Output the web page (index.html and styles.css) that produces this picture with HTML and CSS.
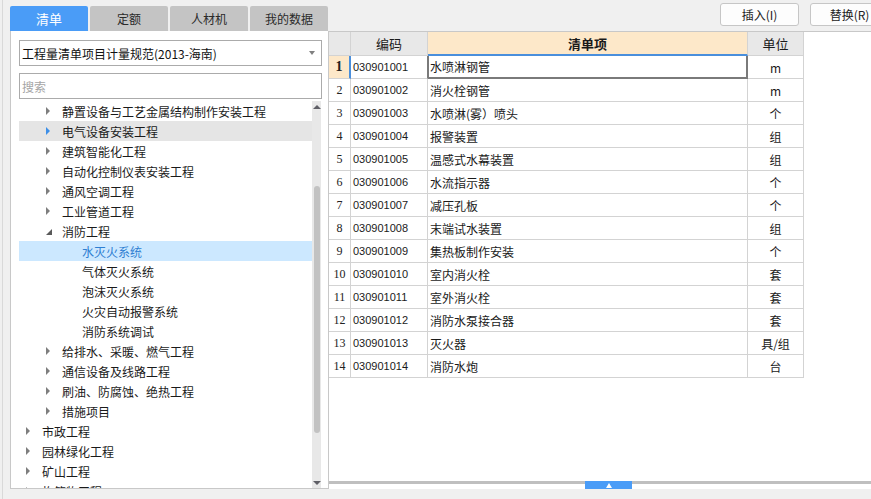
FILE: index.html
```html
<!DOCTYPE html>
<html lang="zh-CN">
<head>
<meta charset="utf-8">
<title>清单</title>
<link rel="stylesheet" href="styles.css">
</head>
<body>
<div class="app">
  <div class="frame-line"></div>
  <div class="left">
    <div class="tabs">
      <div class="tab active">清单</div>
      <div class="tab">定额</div>
      <div class="tab">人材机</div>
      <div class="tab">我的数据</div>
    </div>
    <div class="panel">
      <div class="select"><span>工程量清单项目计量规范(2013-海南)</span><i class="caret"></i></div>
      <div class="search">搜索</div>
      <div class="tree">
        <div class="tree-list">
          <div class="node l2"><i class="arr"></i><span>静置设备与工艺金属结构制作安装工程</span></div>
          <div class="node l2 hover"><i class="arr"></i><span>电气设备安装工程</span></div>
          <div class="node l2"><i class="arr"></i><span>建筑智能化工程</span></div>
          <div class="node l2"><i class="arr"></i><span>自动化控制仪表安装工程</span></div>
          <div class="node l2"><i class="arr"></i><span>通风空调工程</span></div>
          <div class="node l2"><i class="arr"></i><span>工业管道工程</span></div>
          <div class="node l2 open"><i class="arr"></i><span>消防工程</span></div>
          <div class="node l3 selected"><i class="arr none"></i><span>水灭火系统</span></div>
          <div class="node l3"><i class="arr none"></i><span>气体灭火系统</span></div>
          <div class="node l3"><i class="arr none"></i><span>泡沫灭火系统</span></div>
          <div class="node l3"><i class="arr none"></i><span>火灾自动报警系统</span></div>
          <div class="node l3"><i class="arr none"></i><span>消防系统调试</span></div>
          <div class="node l2"><i class="arr"></i><span>给排水、采暖、燃气工程</span></div>
          <div class="node l2"><i class="arr"></i><span>通信设备及线路工程</span></div>
          <div class="node l2"><i class="arr"></i><span>刷油、防腐蚀、绝热工程</span></div>
          <div class="node l2"><i class="arr"></i><span>措施项目</span></div>
          <div class="node l1"><i class="arr"></i><span>市政工程</span></div>
          <div class="node l1"><i class="arr"></i><span>园林绿化工程</span></div>
          <div class="node l1"><i class="arr"></i><span>矿山工程</span></div>
          <div class="node l1"><i class="arr"></i><span>构筑物工程</span></div>
        </div>
        <div class="vscroll">
          <i class="sc-up"></i>
          <div class="thumb"></div>
          <i class="sc-down"></i>
        </div>
      </div>
    </div>
  </div>
  <div class="right">
    <div class="toolbar">
      <button class="btn">插入(I)</button>
      <button class="btn">替换(R)</button>
    </div>
    <div class="rpanel">
      <div class="grid">
        <div class="hc corner"></div>
        <div class="hc">编码</div>
        <div class="hc active">清单项</div>
        <div class="hc">单位</div>

        <div class="c num cur">1</div><div class="c code cur">030901001</div><div class="c item sel">水喷淋钢管</div><div class="c unit">m</div>
        <div class="c num">2</div><div class="c code">030901002</div><div class="c item">消火栓钢管</div><div class="c unit">m</div>
        <div class="c num">3</div><div class="c code">030901003</div><div class="c item">水喷淋(雾）喷头</div><div class="c unit">个</div>
        <div class="c num">4</div><div class="c code">030901004</div><div class="c item">报警装置</div><div class="c unit">组</div>
        <div class="c num">5</div><div class="c code">030901005</div><div class="c item">温感式水幕装置</div><div class="c unit">组</div>
        <div class="c num">6</div><div class="c code">030901006</div><div class="c item">水流指示器</div><div class="c unit">个</div>
        <div class="c num">7</div><div class="c code">030901007</div><div class="c item">减压孔板</div><div class="c unit">个</div>
        <div class="c num">8</div><div class="c code">030901008</div><div class="c item">末端试水装置</div><div class="c unit">组</div>
        <div class="c num">9</div><div class="c code">030901009</div><div class="c item">集热板制作安装</div><div class="c unit">个</div>
        <div class="c num">10</div><div class="c code">030901010</div><div class="c item">室内消火栓</div><div class="c unit">套</div>
        <div class="c num">11</div><div class="c code">030901011</div><div class="c item">室外消火栓</div><div class="c unit">套</div>
        <div class="c num">12</div><div class="c code">030901012</div><div class="c item">消防水泵接合器</div><div class="c unit">套</div>
        <div class="c num">13</div><div class="c code">030901013</div><div class="c item">灭火器</div><div class="c unit">具/组</div>
        <div class="c num">14</div><div class="c code">030901014</div><div class="c item">消防水炮</div><div class="c unit">台</div>
      </div>
      <div class="fill"></div>
      <div class="splitter"><div class="grip"><i class="grip-arrow"></i></div></div>
    </div>
  </div>
</div>
</body>
</html>
```

FILE: styles.css
```css
* { box-sizing: border-box; }
html, body { margin: 0; padding: 0; }
body {
  background: #f0f0f0;
  font-family: "Noto Sans CJK SC", "Noto Sans", sans-serif;
  font-size: 12px;
  color: #1a1a1a;
  width: 871px;
  height: 499px;
  overflow: hidden;
}
.app {
  display: flex;
  width: 871px;
  height: 499px;
  overflow: hidden;
}
.frame-line {
  width: 1px;
  margin-left: 2px;
  background: #d9d9d9;
  flex-shrink: 0;
}
.left {
  width: 318px;
  margin-left: 7px;
  padding-top: 6px;
  display: flex;
  flex-direction: column;
  flex-shrink: 0;
}
.tabs {
  display: flex;
  gap: 2px;
  height: 25px;
}
.tab {
  width: 78px;
  height: 25px;
  line-height: 25px;
  text-align: center;
  background: #c4c4c4;
  border-radius: 2px 2px 0 0;
  color: #2a2a2a;
  font-size: 12px;
}
.tab.active {
  background: #4a9cf7;
  color: #fff;
  font-size: 13px;
}
.panel {
  height: 458px;
  background: #fff;
  border-left: 1px solid #c8c8c8;
  border-bottom: 1px solid #c8c8c8;
  padding: 9px 0 0 8px;
  display: flex;
  flex-direction: column;
}
.select, .search {
  width: 303px;
  height: 26px;
  border: 1px solid #ababab;
  display: flex;
  align-items: center;
  padding-left: 2px;
  flex-shrink: 0;
}
.select span { flex: 1; color: #111; }
.caret {
  width: 0;
  height: 0;
  border-left: 3px solid transparent;
  border-right: 3px solid transparent;
  border-top: 4px solid #808080;
  margin-right: 6px;
}
.search {
  margin-top: 7px;
  color: #a5a5a5;
}
.tree {
  margin-top: 2px;
  height: 387px;
  display: flex;
  overflow: hidden;
}
.tree-list {
  width: 293px;
  overflow: hidden;
}
.node {
  height: 20px;
  display: flex;
  align-items: center;
  white-space: nowrap;
  color: #1a1a1a;
}
.node.l1 { padding-left: 7px; }
.node.l2 { padding-left: 27px; }
.node.l3 { padding-left: 47px; }
.node.hover { background: #e5e5e5; }
.node.selected { background: #cce8ff; color: #2f7fd2; }
.arr {
  width: 16px;
  height: 20px;
  display: flex;
  align-items: center;
  flex-shrink: 0;
}
.arr::before {
  content: "";
  display: block;
  width: 0;
  height: 0;
  border-left: 4px solid #7e7e7e;
  border-top: 4px solid transparent;
  border-bottom: 4px solid transparent;
}
.node.hover .arr::before { border-left-color: #3d8fe8; }
.node.open .arr::before {
  border-left: 6px solid transparent;
  border-top: 0;
  border-bottom: 6px solid #5a5a5a;
  margin-top: 2px;
}
.arr.none::before { display: none; }
.vscroll {
  width: 9px;
  background: #e8e8e8;
  display: flex;
  flex-direction: column;
  align-items: center;
}
.sc-up, .sc-down {
  width: 0;
  height: 0;
  border-left: 4px solid transparent;
  border-right: 4px solid transparent;
}
.sc-up {
  border-bottom: 4px solid #5f5f66;
  margin-top: 4px;
}
.thumb {
  width: 6px;
  height: 247px;
  margin-top: 77px;
  background: #c2c2c2;
  border-radius: 3px;
}
.sc-down {
  border-top: 4px solid #5f5f66;
  margin-top: auto;
  margin-bottom: 3px;
}
.right {
  width: 543px;
  display: flex;
  flex-direction: column;
  flex-shrink: 0;
}
.toolbar {
  height: 31px;
  display: flex;
  gap: 11px;
  padding: 3px 0 0 392px;
  overflow: hidden;
}
.btn {
  width: 79px;
  height: 23px;
  flex-shrink: 0;
  background: #fdfdfd;
  border: 1px solid #c6c6c6;
  border-radius: 3px;
  font-family: "Noto Sans CJK SC", "Noto Sans", sans-serif;
  font-size: 12px;
  color: #222;
  padding: 0;
}
.rpanel {
  height: 458px;
  background: #fff;
  border-top: 1px solid #c8c8c8;
  border-left: 1px solid #c8c8c8;
  display: flex;
  flex-direction: column;
}
.grid {
  display: grid;
  grid-template-columns: 22px 77px 320px 56px;
  grid-template-rows: 24px;
  grid-auto-rows: 23px;
  width: 475px;
}
.hc, .c {
  border-right: 1px solid #d3d3d3;
  border-bottom: 1px solid #d3d3d3;
  display: flex;
  align-items: center;
  white-space: nowrap;
  overflow: hidden;
}
.hc {
  height: 24px;
  background: #e8e8e8;
  justify-content: center;
  font-size: 13px;
  color: #1a1a1a;
}
.hc.active {
  background: #fde8c9;
  border-bottom: 2px solid #4a8fdc;
  font-weight: bold;
  font-size: 13px;
}
.num {
  justify-content: center;
  font-family: "Liberation Serif", serif;
  font-size: 12px;
  color: #222;
}
.num.cur {
  background: #fde8c9;
  font-weight: bold;
  font-size: 14px;
  border-right: 2px solid #4a8fdc;
}
.code {
  padding-left: 2px;
  font-family: "Liberation Sans", sans-serif;
  font-size: 11px;
}
.code.cur { border-right-color: #7a7a7a; }
.item { padding-left: 2px; }
.item.sel {
  border-right: 2px solid #7a7a7a;
  border-bottom: 2px solid #7a7a7a;
  box-shadow: inset 1px 0 0 #7a7a7a;
}
.unit { justify-content: center; }
.fill { flex: 1; }
.splitter {
  height: 8px;
  flex-shrink: 0;
  display: flex;
  padding-left: 256px;
  background: linear-gradient(#bfbfbf 0, #bfbfbf 3px, #fff 3px);
}
.grip {
  width: 47px;
  height: 8px;
  background: #4a9cf7;
  display: flex;
  justify-content: center;
  align-items: center;
}
.grip-arrow {
  width: 0;
  height: 0;
  border-left: 3px solid transparent;
  border-right: 3px solid transparent;
  border-bottom: 5px solid #fff;
  margin-top: 1px;
}
```
